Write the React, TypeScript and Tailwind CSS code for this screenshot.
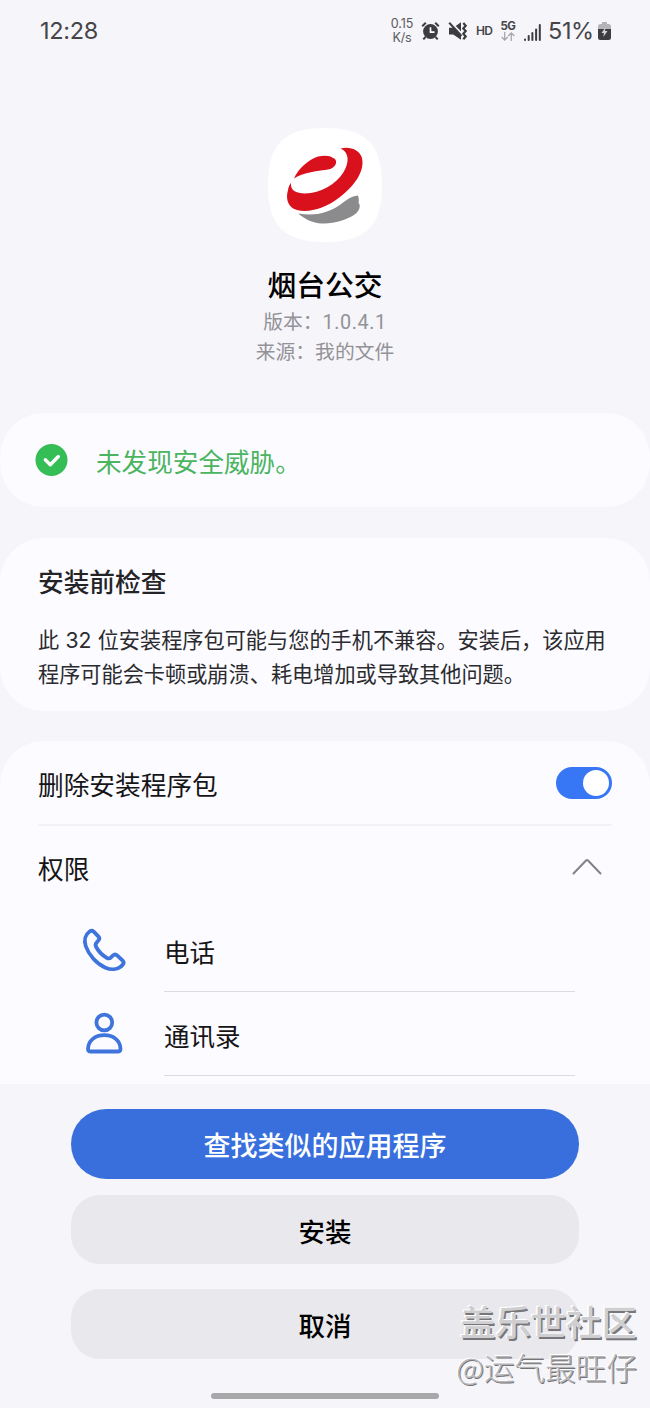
import React from "react";

function StatusBar() {
  return (
    <header className="flex h-[60px] shrink-0 items-center justify-between pl-[40px] pr-[39px] pt-[2px] text-[#454548]">
      <span className="font-['Inter','Noto_Sans_CJK_SC',sans-serif] text-[23.5px] leading-none tracking-[-0.3px]">12:28</span>
      <div className="flex items-center font-['Inter','Noto_Sans_CJK_SC',sans-serif]">
        <div className="w-[24px] text-center text-[12.5px] leading-[14px] tracking-[-0.1px] text-[#5a5a5d]">
          <div>0.15</div>
          <div>K/s</div>
        </div>
        <svg className="ml-[7px]" width="19" height="20" viewBox="0 0 19 20">
          <circle cx="9.5" cy="10.5" r="7.4" fill="#3d3d40" />
          <path d="M1.2 5.2 4.8 1.8M17.8 5.2l-3.6-3.400M4.500 16l-2.200 2.400M14.500 16l2.200 2.400" stroke="#3d3d40" strokeWidth="2" />
          <path d="M9.500 6.300v4.800h4" fill="none" stroke="#fff" strokeWidth="1.700" />
        </svg>
        <svg className="ml-[8px]" width="20" height="20" viewBox="0 0 20 20">
          <path d="M1 6.800h4.200L13 1.200v17.600L5.200 13.600H1z" fill="#3d3d40" />
          <path d="M1.800 .2 14.500 13.500" stroke="#f6f5fa" strokeWidth="2" />
          <path d="M1.200 1.800 13.500 15" stroke="#3d3d40" strokeWidth="2" />
          <path d="m15.300 2 2.400 2.700-2.400 2.700 2.400 2.700-2.400 2.700 2.400 2.700-2.400 2.700" fill="none" stroke="#3d3d40" strokeWidth="2.200" />
        </svg>
        <span className="ml-[8px] w-[17px] text-[12px] font-semibold leading-none tracking-[-0.8px]">HD</span>
        <div className="ml-[7px] flex w-[16px] flex-col items-center">
          <span className="text-[11.5px] font-bold leading-[11px] tracking-[-0.4px]">5G</span>
          <svg width="14" height="9" viewBox="0 0 14 9" fill="none" stroke="#a8a8ac" strokeWidth="1.300">
            <path d="M3.700 0v8M.6 5l3.100 3 3.100-3M10.300 9V1M7.200 4l3.100-3 3.100 3" />
          </svg>
        </div>
        <svg className="ml-[8px] mt-[2px]" width="17" height="17" viewBox="0 0 17 17" fill="#3d3d40">
          <rect x="0" y="14.500" width="2" height="2.500" rx="1" />
          <rect x="3.700" y="11" width="2" height="6" rx="1" />
          <rect x="7.400" y="8" width="2" height="9" rx="1" />
          <rect x="11.100" y="4.500" width="2" height="12.500" rx="1" />
          <rect x="14.800" y="0" width="2" height="17" rx="1" />
        </svg>
        <span className="ml-[7px] w-[48px] whitespace-nowrap text-[23.500px] leading-none tracking-[-0.400px]">51%</span>
        <svg className="ml-[2px]" width="13" height="18" viewBox="0 0 13 18">
          <path d="M4 0h5v2h1.500A2.500 2.500 0 0 1 13 4.500V7H0V4.500A2.500 2.500 0 0 1 2.500 2H4z" fill="#b4b4b8" />
          <path d="M0 7h13v8.500a2.500 2.500 0 0 1-2.500 2.500h-8A2.500 2.500 0 0 1 0 15.500z" fill="#3d3d40" />
          <path d="M7.700 5 3.500 11h2.500L5.300 15l4.200-6H7z" fill="#d4d4d8" />
        </svg>
      </div>
    </header>
  );
}

function AppLogo() {
  return (
    <svg width="114" height="114" viewBox="0 0 114 114">
      <path d="M57 0C98 0 114 16 114 57S98 114 57 114 0 98 0 57 16 0 57 0Z" fill="#fff" />
      <path d="M26 50.500C30 41 40 32 50 28.500C57 27 62 27.500 65 30C69 31 69 36 66 38.500C62 43 54 41.500 44 44C36 45.500 30 47.500 26 50.500Z" fill="#d9111c" />
      <path d="M72.500 20.500C82 18 92 22 94 30C97 44 86 58 72 69C57 81 40 85 29 82C21 80 17 72 20 62C20.500 59 21.500 56.500 23 55C22 62 28 65.500 37 65.500C53 65 68 56 75 45C82 34 81 24 72.500 20.500Z" fill="#d9111c" />
      <path d="M30 85.500C46 88 58 86 71 77.500C78 73 82 68 90 67.500C91 71 91 73 90.500 75C93 77 92 83 86 87C78 92 66 96 54 95.500C44 95 37 91 30 85.500Z" fill="#8b8b8d" />
    </svg>
  );
}

function Permission({ icon, label }: { icon: React.ReactNode; label: string }) {
  return (
    <li className="flex h-[84px] items-center pl-[80px] pr-[75px]">
      <span className="flex w-[84px]">{icon}</span>
      <span className="flex h-full flex-1 items-center border-b border-[#dcdbe2] pt-[3px] text-[25.500px]">{label}</span>
    </li>
  );
}

function PhoneIcon() {
  return (
    <svg className="-mt-[1px]" width="48" height="48" viewBox="0 0 48 48" fill="none" stroke="#3f74dc" strokeWidth="3.800" strokeLinejoin="round">
      <path d="M9.600 5.500C11 4.500 12.500 4.500 13.700 5.600L18.300 10.300C19.600 11.700 19.500 13.400 18.200 14.700L16.500 16.700C15.300 18.100 15.300 19.600 16.300 21.200C19 26 22.300 29.200 26.700 31.800C28.300 32.700 30 32.500 31.200 31.200L32.900 29.500C34.200 28.200 36 28.300 37.400 29.600L42.700 34.700C44 36 43.800 37.600 42.600 38.900C38.700 43.300 32 44.500 25.500 41.700C16.500 37.700 8.800 29 5.700 20C3.800 14.300 5.300 8.500 9.600 5.500Z" />
    </svg>
  );
}

function ContactIcon() {
  return (
    <svg className="-mt-[3px]" width="48" height="48" viewBox="0 0 48 48" fill="none" stroke="#3f74dc" strokeWidth="3.800">
      <circle cx="24.300" cy="13.500" r="7.900" />
      <path d="M10.800 42.500C9 42.500 8 41.500 8 39.700C8.300 31.500 15.200 26.200 24.300 26.200C33.500 26.200 40.200 31.500 40.500 39.700C40.500 41.500 39.500 42.500 37.700 42.500Z" />
    </svg>
  );
}

const cardClass = "shrink-0 bg-[#fcfbff]";

export default function App() {
  return (
    <div className="relative flex h-[1408px] w-[650px] flex-col overflow-hidden bg-[#f6f5fa] font-['Noto_Sans_CJK_SC',sans-serif] text-[#151517]">
      <StatusBar />
      <section className="flex h-[353px] shrink-0 flex-col items-center pt-[68px]">
        <AppLogo />
        <h1 className="mt-[21px] text-[28.800px] font-medium leading-[42px] text-black">烟台公交</h1>
        <div className="text-center text-[19.800px] text-[#929297]">
          <p className="h-[31px] leading-[31px]">版本：<span className="font-['Roboto',sans-serif] tracking-[0.6px]">1.0.4.1</span></p>
          <p className="h-[31px] leading-[29px]">来源：我的文件</p>
        </div>
      </section>

      <section className={`${cardClass} flex h-[94px] items-center rounded-[44px] pl-[35px]`}>
        <svg width="33" height="33" viewBox="0 0 33 33">
          <circle cx="16.500" cy="16" r="16" fill="#35bd56" />
          <path d="m10.300 15.700 5 5 8-8.200" fill="none" stroke="#fff" strokeWidth="3.400" strokeLinecap="round" strokeLinejoin="round" />
        </svg>
        <span className="ml-[28px] mt-[3px] text-[25.600px] text-[#4ab45f]">未发现安全威胁。</span>
      </section>

      <section className={`${cardClass} mt-[31px] h-[173px] rounded-[44px] pl-[38px] pt-[23px]`}>
        <h2 className="text-[25.700px] font-medium leading-[40px] text-[#242427]">安装前检查</h2>
        <p className="mt-[22px] whitespace-nowrap text-[21.180px] leading-[32.500px] text-[#2b2b2f]">
          此 <span className="mx-[1.500px] font-['Inter',sans-serif]">32</span> 位安装程序包可能与您的手机不兼容。安装后，该应用
          <br />
          程序可能会卡顿或崩溃、耗电增加或导致其他问题。
        </p>
      </section>

      <section className={`${cardClass} mt-[30px] h-[343px] rounded-t-[44px]`}>
        <div className="mx-[38px] flex h-[85px] items-center justify-between border-b-2 border-[#f3f2f7] text-[25.700px]">
          <span className="pt-[4px]">删除安装程序包</span>
          <button aria-label="删除安装程序包" className="flex h-[32px] w-[56px] items-center justify-end rounded-full bg-[#3777f6] pr-[3px]">
            <span className="h-[26px] w-[26px] rounded-full bg-white" />
          </button>
        </div>
        <div className="mx-[38px] flex h-[82px] items-center justify-between text-[25.700px]">
          <span className="pt-[3px]">权限</span>
          <svg className="mr-[9px]" width="32" height="18" viewBox="0 0 32 18" fill="none" stroke="#828287" strokeWidth="2" strokeLinecap="round" strokeLinejoin="round">
            <path d="M2.500 15.500 15 2.500q1-1 2 0l12.500 13" />
          </svg>
        </div>
        <ul>
          <Permission icon={<PhoneIcon />} label="电话" />
          <Permission icon={<ContactIcon />} label="通讯录" />
        </ul>
      </section>

      <footer className="flex h-[324px] shrink-0 flex-col items-center bg-[#f6f5fa] pt-[25px] text-[27px] font-medium">
        <button className="h-[70px] w-[508px] rounded-full bg-[#386fdd] pt-[3px] text-white">查找类似的应用程序</button>
        <button className="mt-[16px] h-[69px] w-[508px] rounded-[29px] bg-[#e9e8ed] pt-[2px] text-[26.500px] text-black">安装</button>
        <button className="mt-[25px] h-[70px] w-[508px] rounded-[29px] bg-[#e9e8ed] pt-[1px] text-[26.500px] text-black">取消</button>
        <div className="mt-[34px] h-[6px] w-[228px] rounded-full bg-[#a8a8aa]" />
      </footer>

      <div className="pointer-events-none absolute right-[13px] top-[1298px] whitespace-nowrap text-right">
        <div className="text-[35.400px] font-medium leading-[46px] text-[#cfcfd1] [text-shadow:-1.5px_-1.5px_0_#fff,1.5px_1.5px_0_#77777a]">盖乐世社区</div>
        <div className="text-[30.600px] font-light leading-[46px] text-[#b4b4b7] [text-shadow:-1px_-1px_0_#fff,1px_1px_0_#747477]">@运气最旺仔</div>
      </div>
    </div>
  );
}
